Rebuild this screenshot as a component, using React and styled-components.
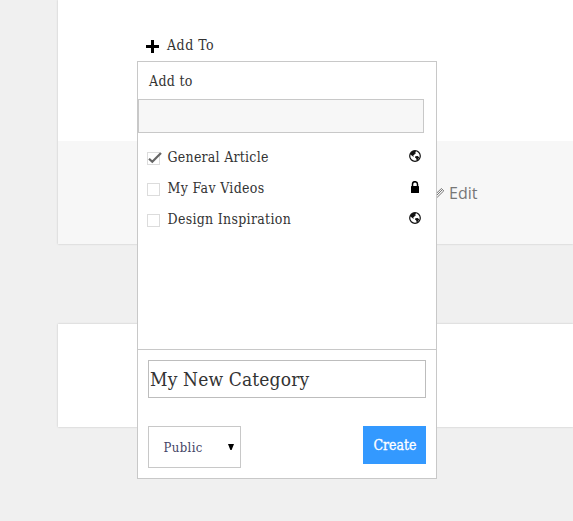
import React from 'react';
import styled, { createGlobalStyle } from 'styled-components';

const Global = createGlobalStyle`
  * { box-sizing: border-box; }
  body { margin: 0; background: #f0f0f0; overflow: hidden; }
`;
const Page = styled.main`
  position: relative;
  height: 521px;
  padding-left: 58px;
  display: flex;
  flex-direction: column;
  gap: 80px;
  overflow: hidden;
  background: #f0f0f0;
  color: #333;
  font: 14px/20px "DejaVu Serif Condensed", "DejaVu Serif", serif;
`;
const Card = styled.section`
  flex: none;
  background: #fff;
  height: ${p => p.$height}px;
  box-shadow: 0 0 2px rgba(0, 0, 0, 0.2);
`;
const CardBody = styled.div`
  height: 141px;
  padding: 35px 0 0 88px;
`;
const CardFooter = styled.footer`
  height: 103px;
  padding: 40px 0 0 375px;
  display: flex;
  align-items: flex-start;
  gap: 4px;
  background: #f7f7f7;
  color: #767676;
  font: 16px/24px "Open Sans", sans-serif;
  svg { margin-top: 6px; }
`;
const AddTrigger = styled.div`
  display: flex;
  align-items: center;
  gap: 8px;
  svg { margin-top: 3px; }
`;
const Label = styled.span`
  display: inline-block;
  white-space: nowrap;
  letter-spacing: ${p => p.$spacing || 0}px;
`;
const Popover = styled.div`
  position: absolute;
  left: 137px;
  top: 61px;
  width: 300px;
  height: 418px;
  display: flex;
  flex-direction: column;
  border: 1px solid #c8c8c8;
  background: #fff;
`;
const Title = styled.div`
  height: 37px;
  padding: 9px 0 0 11px;
`;
const Search = styled.input`
  display: block;
  width: 286px;
  height: 34px;
  border: 1px solid #c8c8c8;
  background: #f7f7f7;
  outline: none;
`;
const List = styled.div`
  flex: 1;
  padding: 8px 15px 0 9px;
`;
const Row = styled.div`
  height: 31px;
  display: flex;
  align-items: center;
  gap: 7px;
  > svg { margin: 0 0 2px auto; }
`;
const Check = styled.span`
  width: 13px;
  height: 13px;
  flex: none;
  margin-top: 3px;
  margin-right: 0.5px;
  border: 1px solid #dcdcdc;
  background: #fff;
  svg { display: block; overflow: visible; }
`;
const Form = styled.div`
  height: 129px;
  padding: 10px;
  display: flex;
  flex-direction: column;
  gap: 28px;
  border-top: 1px solid #c8c8c8;
`;
const NameField = styled.div`
  height: 38px;
  padding: 0 1px;
  border: 1px solid #bdbdbd;
  font-size: 19px;
  line-height: 36px;
`;
const Actions = styled.div`
  display: flex;
  justify-content: space-between;
  align-items: flex-start;
`;
const Select = styled.div`
  width: 93px;
  height: 42px;
  padding: 1px 6px 0 14.5px;
  display: flex;
  align-items: center;
  justify-content: space-between;
  border: 1px solid #c8c8c8;
  color: #444466;
  font-size: 13px;
  svg { margin-bottom: 1px; }
`;
const Create = styled.button`
  width: 63px;
  height: 38px;
  padding: 0 0 0 1px;
  border: 0;
  background: #3399ff;
  color: #fff;
  font: inherit;
  -webkit-text-stroke: 0.3px #fff;
`;

const Plus = () => (
  <svg width="13" height="13" viewBox="0 0 13 13"><path d="M5 0h3v5h5v3H8v5H5V8H0V5h5z" fill="#000" /></svg>
);
const Globe = () => (
  <svg width="12" height="12" viewBox="0 0 12 12">
    <circle cx="6" cy="6" r="5.3" fill="none" stroke="#111" strokeWidth="1.2" />
    <path d="M2.2 2.2 4.6.8 7 1 6.3 2.5 7 3.3 5.6 4 5.3 5 4 5.1 4.9 6.1 4.3 6.7 2.8 5.6 1.2 4.5zM6.3 6.2 8.6 6.1 10.2 7.3 9 9.4 7.7 10.6 7.2 8.4 6 7.5z" fill="#111" />
  </svg>
);
const Lock = () => (
  <svg width="12" height="12" viewBox="0 0 12 12">
    <path d="M3.5 5.5V3.2a2.5 2.5 0 0 1 5 0v2.3" fill="none" stroke="#000" strokeWidth="1.5" />
    <rect x="2" y="5" width="8" height="7" rx=".5" fill="#000" />
  </svg>
);
const Tick = () => (
  <svg width="11" height="11" viewBox="0 0 11 11"><path d="M1 5.7 4.3 8.8 13 0" fill="none" stroke="#666" strokeWidth="2.2" /></svg>
);
const Pencil = () => (
  <svg width="12" height="12" viewBox="0 0 12 12">
    <path d="M1.2 10.8 2 7.8 8.3 1.5 10.8 3.8 4.3 10.2zM3 9 9 3" fill="none" stroke="#767676" strokeWidth="1" />
  </svg>
);
const Arrow = () => (
  <svg width="6" height="6" viewBox="0 0 6 6"><path d="M0 0h6L3.6 6H2.4z" fill="#000" /></svg>
);

const categories = [
  { name: 'General Article', checked: true, icon: Globe, spacing: 0.25 },
  { name: 'My Fav Videos', checked: false, icon: Lock, spacing: 0.32 },
  { name: 'Design Inspiration', checked: false, icon: Globe, spacing: 0.3 },
];

export default function App() {
  return (
    <Page>
      <Global />
      <Card $height={244}>
        <CardBody>
          <AddTrigger><Plus /><Label $spacing={0.5}>Add To</Label></AddTrigger>
        </CardBody>
        <CardFooter><Pencil /><Label>Edit</Label></CardFooter>
      </Card>
      <Card $height={103} />
      <Popover>
        <Title><Label $spacing={0.3}>Add to</Label></Title>
        <Search aria-label="Search categories" />
        <List>
          {categories.map(({ name, checked, icon: Icon, spacing }) => (
            <Row key={name}>
              <Check>{checked && <Tick />}</Check>
              <Label $spacing={spacing}>{name}</Label>
              <Icon />
            </Row>
          ))}
        </List>
        <Form>
          <NameField><Label $spacing={0.15}>My New Category</Label></NameField>
          <Actions>
            <Select><Label $spacing={0.4}>Public</Label><Arrow /></Select>
            <Create><Label>Create</Label></Create>
          </Actions>
        </Form>
      </Popover>
    </Page>
  );
}
